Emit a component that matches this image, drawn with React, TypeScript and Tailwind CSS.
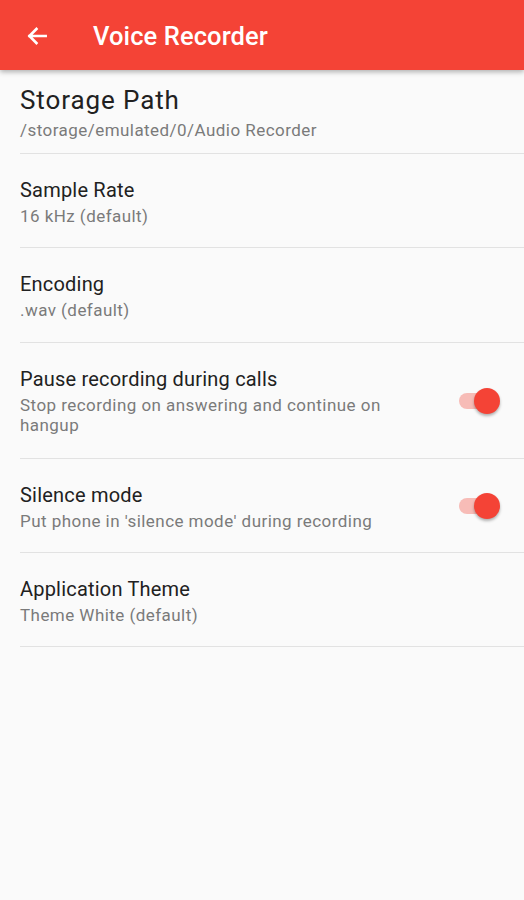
import React from "react";

function Toggle() {
  return (
    <div className="relative w-[44px] h-[28px] flex items-center">
      <div className="ml-[3px] w-[36px] h-[16px] rounded-full bg-[#f7bcb7]" />
      <div className="absolute right-0 top-[1px] w-[26px] h-[26px] rounded-full bg-[#f44336] shadow-[0_2px_3px_rgba(0,0,0,0.3)]" />
    </div>
  );
}

type Item = { title: string; sub: string; toggle?: boolean; h: string };

const items: Item[] = [
  { title: "Sample Rate", sub: "16 kHz (default)", h: "h-[94px]" },
  { title: "Encoding", sub: ".wav (default)", h: "h-[95px]" },
  { title: "Pause recording during calls", sub: "Stop recording on answering and continue on hangup", toggle: true, h: "h-[116px]" },
  { title: "Silence mode", sub: "Put phone in 'silence mode' during recording", toggle: true, h: "h-[94px]" },
  { title: "Application Theme", sub: "Theme White (default)", h: "h-[94px]" },
];

export default function App() {
  return (
    <div className="w-[524px] h-[900px] bg-[#fafafa] overflow-hidden" style={{ fontFamily: "Roboto, 'Noto Sans', sans-serif" }}>
      <div className="relative z-10 h-[70px] bg-[#f44336] flex items-center shadow-[0_2px_5px_rgba(0,0,0,0.3)]">
        <svg className="ml-[24px] mt-[2px]" width="26" height="26" viewBox="0 0 24 24" fill="none">
          <path d="M20 12H5M11.5 5.5L5 12l6.5 6.5" stroke="white" strokeWidth="2.4" strokeLinecap="square" />
        </svg>
        <div className="ml-[43px] mt-[4px] text-white text-[25.5px] font-medium leading-none tracking-[0.1px]">Voice Recorder</div>
      </div>
      <div className="pl-[20px]">
        <div className="h-[84px] border-b border-[#e2e2e2] flex flex-col pt-[15px]">
          <div className="text-[26px] leading-[31px] text-[#212121] tracking-[0.9px]">Storage Path</div>
          <div className="text-[17px] leading-[22px] text-[#7a7a7a] mt-[3px] tracking-[0.45px]">/storage/emulated/0/Audio Recorder</div>
        </div>
        {items.map((it) => (
          <div key={it.title} className={`border-b border-[#e2e2e2] flex items-center pr-[24px] ${it.h}`}>
            <div className="flex-1 self-start pt-[23px] pr-[60px]">
              <div className="text-[20px] leading-[26px] text-[#212121] tracking-[0.2px]">{it.title}</div>
              <div className="text-[17px] leading-[20px] text-[#7a7a7a] mt-[3px] max-w-[380px] tracking-[0.45px]">{it.sub}</div>
            </div>
            {it.toggle && <Toggle />}
          </div>
        ))}
      </div>
    </div>
  );
}
